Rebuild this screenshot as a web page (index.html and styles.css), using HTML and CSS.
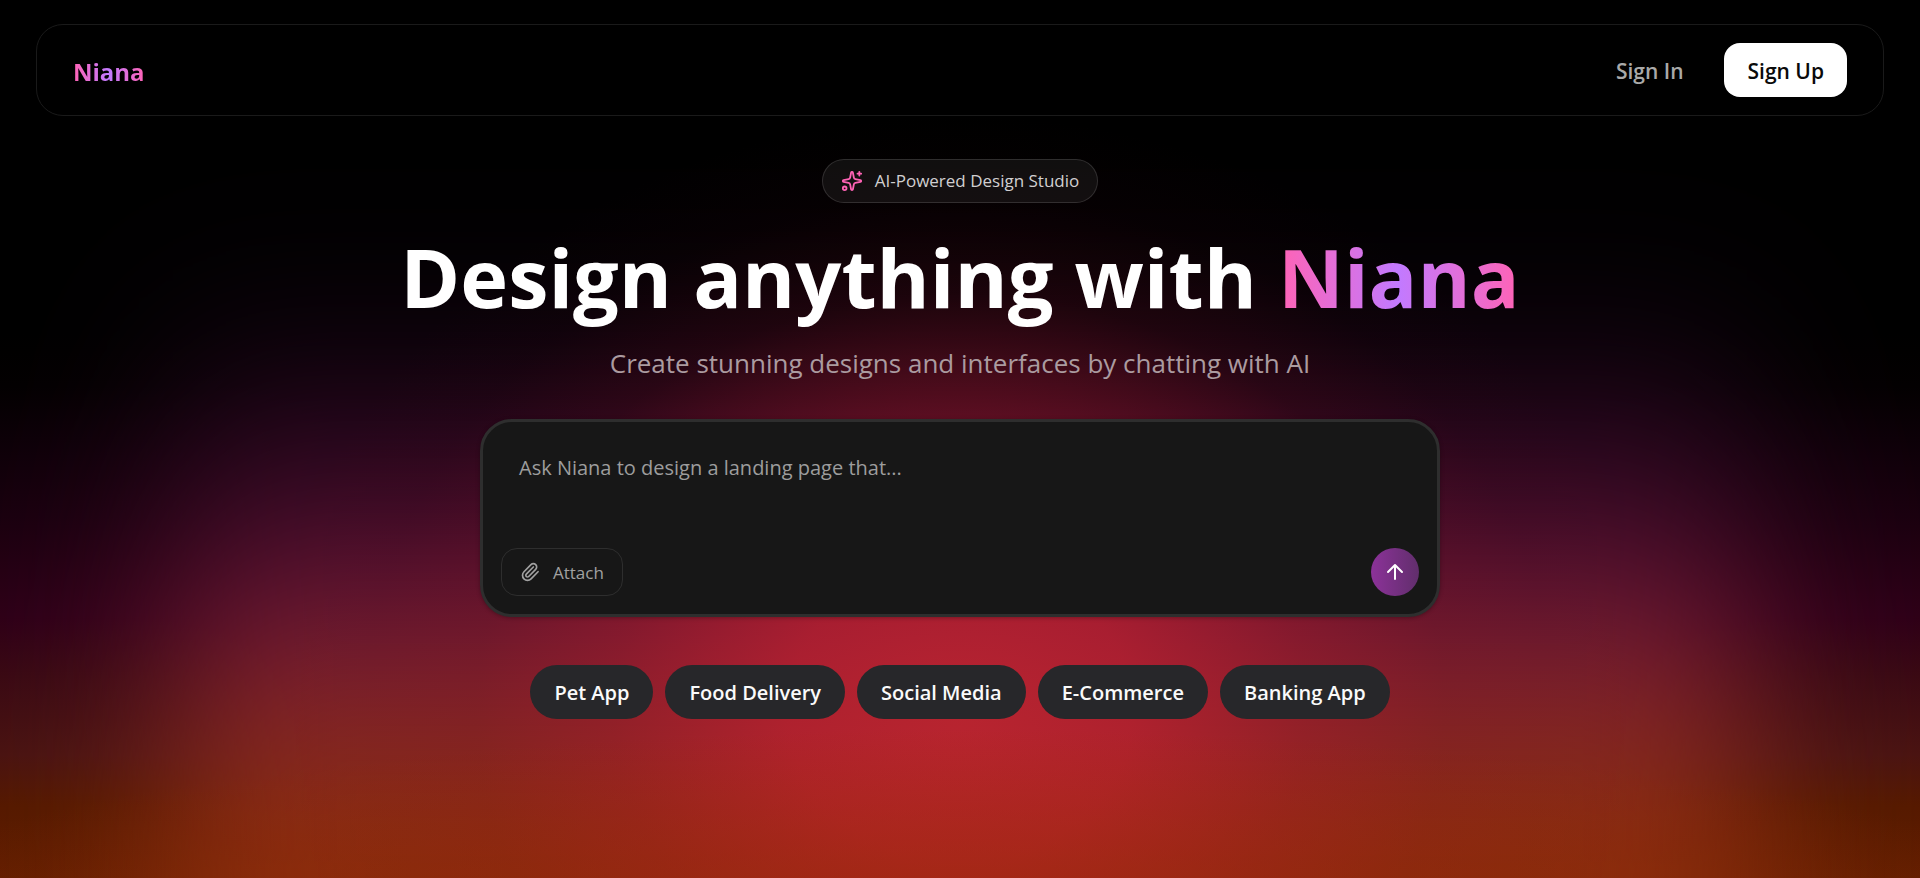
FILE: index.html
```html
<!DOCTYPE html>
<html lang="en">
<head>
<meta charset="utf-8">
<title>Niana</title>
<meta name="viewport" content="width=device-width, initial-scale=1">
<link rel="stylesheet" href="styles.css">
</head>
<body>
<div class="page">
  <div class="glow" aria-hidden="true">
    <div class="glow-wide"></div>
    <div class="glow-core"></div>
  </div>
  <header class="navbar">
    <a class="logo brand" href="#">Niana</a>
    <nav class="nav-actions">
      <a class="btn btn-ghost" href="#">Sign In</a>
      <a class="btn btn-solid" href="#">Sign Up</a>
    </nav>
  </header>
  <main class="hero">
    <p class="badge">
      <svg class="badge-icon" viewBox="0 0 24 24" aria-hidden="true">
        <path d="M11.017 2.814a1 1 0 0 1 1.966 0l1.051 5.558a2 2 0 0 0 1.594 1.594l5.558 1.051a1 1 0 0 1 0 1.966l-5.558 1.051a2 2 0 0 0-1.594 1.594l-1.051 5.558a1 1 0 0 1-1.966 0l-1.051-5.558a2 2 0 0 0-1.594-1.594l-5.558-1.051a1 1 0 0 1 0-1.966l5.558-1.051a2 2 0 0 0 1.594-1.594z"/>
        <path d="M20 2v4M22 4h-4"/>
        <circle cx="4" cy="20" r="2"/>
      </svg>
      <span>AI-Powered Design Studio</span>
    </p>
    <h1 class="title">Design anything with <span class="brand">Niana</span></h1>
    <p class="subtitle">Create stunning designs and interfaces by chatting with AI</p>
    <form class="prompt">
      <textarea class="prompt-input" aria-label="Prompt" placeholder="Ask Niana to design a landing page that..."></textarea>
      <div class="prompt-bar">
        <button class="attach" type="button">
          <svg class="attach-icon" viewBox="0 0 24 24" aria-hidden="true"><path d="m16 6-8.414 8.586a2 2 0 0 0 2.829 2.829l8.414-8.586a4 4 0 1 0-5.657-5.657l-8.379 8.551a6 6 0 1 0 8.485 8.485l8.379-8.551"/></svg>
          Attach
        </button>
        <button class="send" type="submit" aria-label="Send">
          <svg class="send-icon" viewBox="0 0 24 24" aria-hidden="true"><path d="m5 12 7-7 7 7M12 19V5"/></svg>
        </button>
      </div>
    </form>
    <div class="chips">
      <button class="chip" type="button">Pet App</button>
      <button class="chip" type="button">Food Delivery</button>
      <button class="chip" type="button">Social Media</button>
      <button class="chip" type="button">E-Commerce</button>
      <button class="chip" type="button">Banking App</button>
    </div>
  </main>
</div>
</body>
</html>
```
FILE: styles.css
```css
* { box-sizing: border-box; }

body {
  margin: 0;
  background: #000;
  color: #fff;
  font-family: "Segoe UI", "Open Sans", "Noto Sans", sans-serif;
}

button, textarea { font: inherit; }
p, h1 { margin: 0; }

svg {
  display: block;
  flex: none;
  fill: none;
  stroke: currentColor;
  stroke-width: 2;
  stroke-linecap: round;
  stroke-linejoin: round;
}

.page {
  position: relative;
  min-height: 100vh;
  padding: 24px 36px;
  overflow: hidden;
}

/* Background glow */
.glow {
  position: absolute;
  inset: 0;
  z-index: -1;
  overflow: hidden;
  background: linear-gradient(#000 36%, #040002 44%, #10000a 52%, #1c0010 60%, #2e0018 70%, #3a0a14 77%, #4a1412 86%, #561a00 92%, #601e00);
}

.glow-wide {
  position: absolute;
  inset: 20% 9% -20%;
  background: linear-gradient(transparent 10%, #160414 27%, #3c0a28 37%, #580f30 46%, #781c36 54%, #8a2826 62%, #8c2c16 70%, #842c08 80%);
  filter: blur(80px);
}

.glow-core {
  position: absolute;
  inset: 0;
  background:
    radial-gradient(ellipse 60% 24% at 50% 107%, rgb(156 44 6 / 70%), rgb(156 44 6 / 40%) 45%, transparent),
    radial-gradient(ellipse 36% 68% at 50% 81%, rgb(196 36 50 / 82%), rgb(192 32 50 / 72%) 25%, rgb(168 26 46 / 42%) 50%, rgb(130 18 36 / 16%) 70%, rgb(90 10 25 / 5%) 86%, transparent);
}

.brand {
  background: linear-gradient(90deg, #ff63b5, #c27aff 50%, #ff63b5);
  background-clip: text;
  -webkit-background-clip: text;
  color: transparent;
}

/* Navigation */
.navbar {
  display: flex;
  align-items: center;
  justify-content: space-between;
  padding: 18px 36px;
  border: 1px solid #1a1a1a;
  border-radius: 27px;
  background: #000;
}

.logo {
  padding-top: 2px;
  font-size: 24px;
  font-weight: 700;
  text-decoration: none;
}

.nav-actions {
  display: flex;
  gap: 18px;
}

.btn {
  padding: 2px 23px 0;
  border-radius: 16px;
  font-size: 21px;
  font-weight: 600;
  line-height: 52px;
  text-decoration: none;
}

.btn-ghost { color: #a9a9a9; }

.btn-solid {
  background: #fff;
  color: #0a0a0a;
}

/* Hero */
.hero {
  display: flex;
  flex-direction: column;
  align-items: center;
  padding-top: 43px;
}

.badge {
  display: flex;
  align-items: center;
  gap: 12px;
  padding: 8px 18px;
  border: 1px solid rgb(255 255 255 / 13%);
  border-radius: 22px;
  background: rgb(255 255 255 / 6%);
  color: #d1cfd0;
  font-size: 17px;
  line-height: 26px;
}

.badge-icon {
  width: 22px;
  height: 22px;
  color: #ff63b5;
}

.title {
  margin-top: 24px;
  font-size: 81px;
  font-weight: 700;
  line-height: 100px;
  text-align: center;
}

.subtitle {
  margin-top: 18px;
  color: #ab9ba0;
  font-size: 26px;
  line-height: 36px;
  text-align: center;
}

.prompt {
  width: 100%;
  max-width: 960px;
  margin-top: 38px;
  padding: 18px;
  border: 3px solid #2e2e2e;
  border-radius: 32px;
  background: #171717;
  box-shadow: 0 1px 4px rgb(0 0 0 / 30%);
}

.prompt-input {
  display: block;
  width: 100%;
  height: 108px;
  padding: 12px 18px;
  border: 0;
  outline: 0;
  resize: none;
  background: transparent;
  color: #fff;
  font-size: 20px;
  line-height: 32px;
}

.prompt-input::placeholder {
  color: #9d9d9d;
  opacity: 1;
}

.prompt-bar {
  display: flex;
  justify-content: space-between;
}

.attach {
  display: flex;
  align-items: center;
  gap: 13px;
  height: 48px;
  padding: 0 18px;
  border: 1px solid #2e2e2e;
  border-radius: 16px;
  background: transparent;
  color: #a1a1a1;
  font-size: 17px;
}

.attach-icon {
  width: 20px;
  height: 20px;
}

.send {
  display: grid;
  place-items: center;
  width: 48px;
  height: 48px;
  padding: 0;
  border: 0;
  border-radius: 50%;
  background: linear-gradient(90deg, #8c3299, #612e6c);
  color: #fff;
}

.send-icon {
  width: 24px;
  height: 24px;
}

.chips {
  display: flex;
  flex-wrap: wrap;
  justify-content: center;
  gap: 12px;
  margin-top: 48px;
}

.chip {
  height: 54px;
  padding: 1px 24px 0;
  border: 0;
  border-radius: 27px;
  background: #27272a;
  color: #fafafa;
  font-size: 20px;
  font-weight: 600;
}
```
